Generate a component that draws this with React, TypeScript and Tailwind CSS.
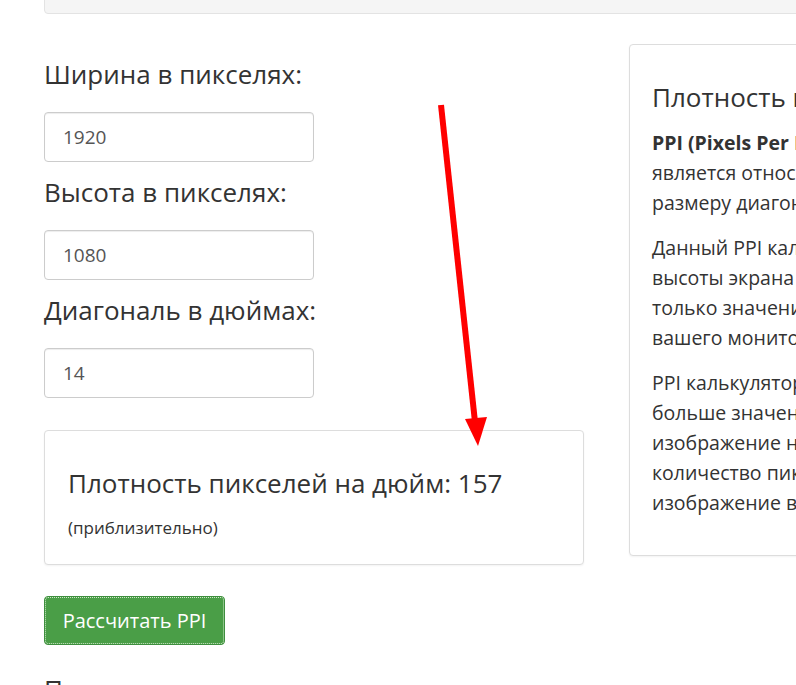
import React from "react";

const fields = [
  { label: "Ширина в пикселях:", value: "1920" },
  { label: "Высота в пикселях:", value: "1080" },
  { label: "Диагональ в дюймах:", value: "14" },
];

function Field({ label, value }: { label: string; value: string }) {
  return (
    <div className="mt-[14px]">
      <h3 className="text-[26px] leading-[33px] font-normal text-[#333]">{label}</h3>
      <input
        readOnly
        value={value}
        className="mt-[21px] block h-[50px] w-[270px] rounded-[4px] border border-[#ccc] bg-white pl-[18px] text-[19px] text-[#555] shadow-[inset_0_1px_1px_rgba(0,0,0,0.075)] outline-none"
      />
    </div>
  );
}

function InfoCard() {
  return (
    <div className="w-[520px] shrink-0 rounded-[4px] border border-[#ddd] bg-white px-[22px] pt-[36px] pb-[37px] shadow-[0_1px_2px_rgba(0,0,0,0.05)]">
      <h3 className="whitespace-nowrap text-[26px] leading-[33px] font-normal text-[#333]">
        Плотность пикселей на дюйм
      </h3>
      <div className="mt-[14px] whitespace-nowrap text-[19.5px] leading-[30px] text-[#333]">
        <p>
          <strong>PPI (Pixels Per Inch)</strong> — плотность пикселей на дюйм,
          <br />
          является относительной величиной к
          <br />
          размеру диагонали экрана.
        </p>
        <p className="mt-[15px]">
          Данный PPI калькулятор рассчитывает плотность
          <br />
          высоты экрана в пикселях и диагонали. Вам нужно
          <br />
          только значения ширины, высоты и диагонали
          <br />
          вашего монитора.
        </p>
        <p className="mt-[15px]">
          PPI калькулятор показывает, что чем
          <br />
          больше значение PPI, тем более четкое
          <br />
          изображение на экране, так как большее
          <br />
          количество пикселей формирует
          <br />
          изображение в том же размере.
        </p>
      </div>
    </div>
  );
}

export default function App() {
  return (
    <div className="relative h-[685px] w-full overflow-hidden bg-white font-['Open_Sans',sans-serif] text-[#333]">
      <div className="-mt-[20px] ml-[44px] h-[34px] w-[800px] rounded-b-[4px] border border-[#e3e3e3] bg-[#f5f5f5]" />

      <div className="mt-[30px] ml-[44px] flex w-[1200px] items-start gap-[45px]">
        <div className="w-[540px] shrink-0">
          {fields.map((f) => (
            <Field key={f.label} label={f.label} value={f.value} />
          ))}

          <div className="mt-[32px] h-[135px] rounded-[4px] border border-[#ddd] bg-white px-[23px] pt-[36px] shadow-[0_1px_2px_rgba(0,0,0,0.05)]">
            <h3 className="whitespace-nowrap text-[26px] leading-[33px] font-normal text-[#333]">
              Плотность пикселей на дюйм: 157
            </h3>
            <p className="mt-[16px] text-[17px] leading-[24px] text-[#333]">(приблизительно)</p>
          </div>

          <button className="mt-[31px] flex h-[49px] w-[181px] items-center justify-center rounded-[4px] border border-[#3e8f3e] bg-[#4a9e47] text-[20px] text-white outline-1 outline-offset-[-2px] outline-dotted outline-[#cfe8c9]">
            Рассчитать PPI
          </button>

          <h3 className="mt-[28px] whitespace-nowrap text-[26px] leading-[33px] font-normal text-[#333]">
            Похожие калькуляторы
          </h3>
        </div>

        <InfoCard />
      </div>

      <svg className="pointer-events-none absolute inset-0" width="796" height="685" viewBox="0 0 796 685">
        <line x1="441" y1="105" x2="475" y2="422" stroke="#f00" strokeWidth="6" />
        <polygon points="465,419 487,417 478,446" fill="#f00" />
      </svg>
    </div>
  );
}
